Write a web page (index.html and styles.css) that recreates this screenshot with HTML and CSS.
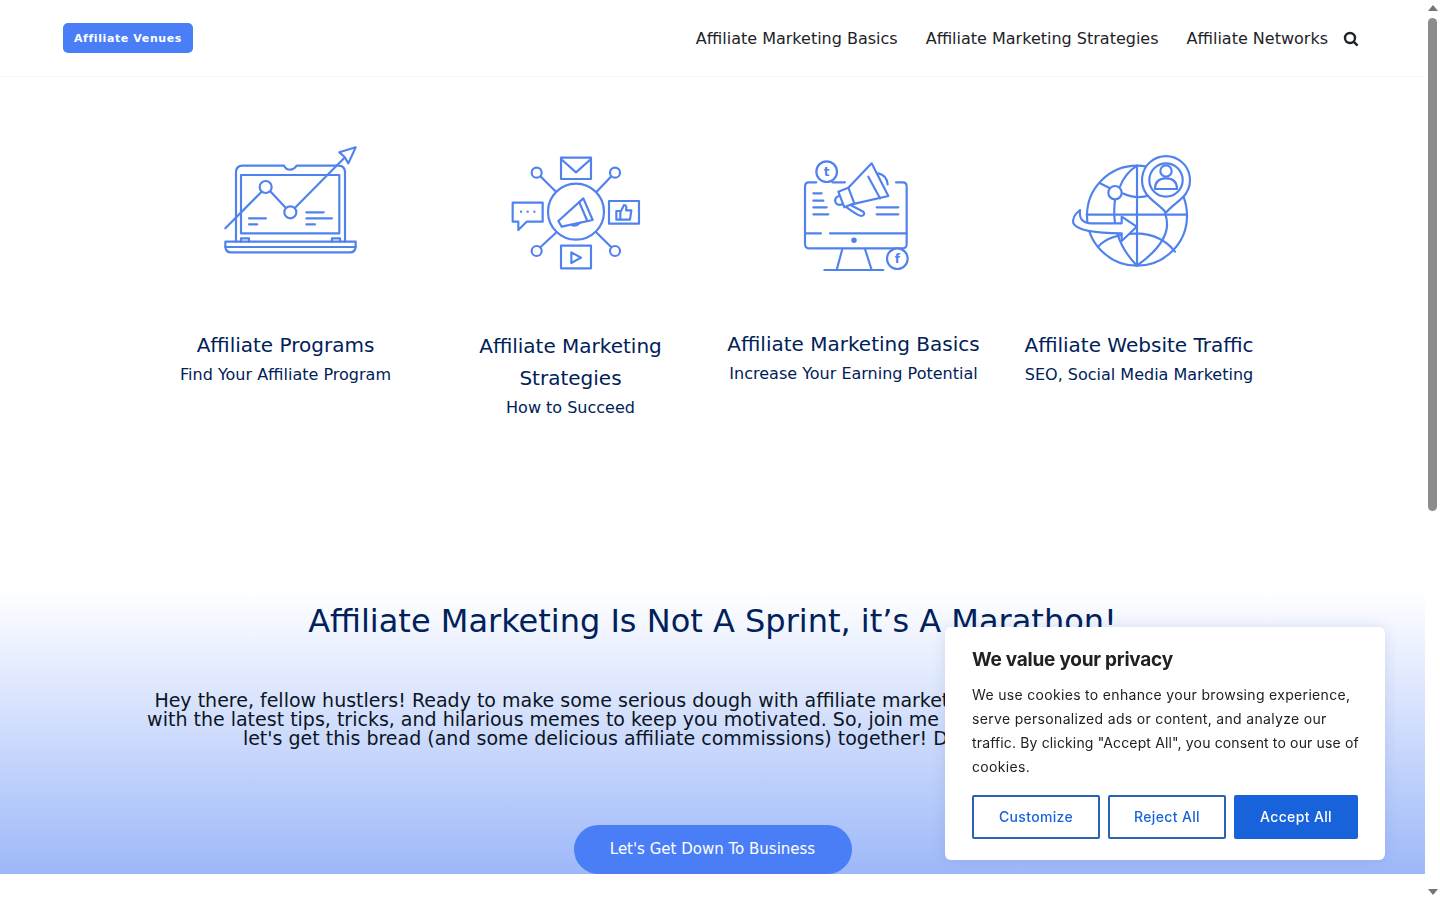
FILE: index.html
```html
<!DOCTYPE html>
<html lang="en">
<head>
<meta charset="utf-8">
<title>Affiliate Venues</title>
<link rel="stylesheet" href="styles.css">
</head>
<body>
<div class="window">
  <div class="page">
    <header class="site-header">
      <a class="logo" href="#">Affiliate Venues</a>
      <nav class="nav">
        <a href="#">Affiliate Marketing Basics</a>
        <a href="#">Affiliate Marketing Strategies</a>
        <a href="#">Affiliate Networks</a>
        <svg class="search" viewBox="0 0 16 16" width="16" height="16"><circle cx="7" cy="7" r="5"/><path d="M10.8 10.8 14.6 14.6"/></svg>
      </nav>
    </header>

    <section class="features">
      <article class="card card-one">
        <svg class="icon icon-one" width="160" height="130" viewBox="0 0 480 390">
          <path d="M78 320V112Q78 92 98 92H222Q228 104 240 104T260 92H385Q405 92 405 112V320"/>
          <rect x="93" y="120" width="295" height="175"/>
          <rect x="46" y="320" width="391" height="16"/>
          <path d="M46 336Q48 352 62 352H421Q435 352 437 336"/>
          <path d="M93 320V310H117V320M366 320V310H390V320"/>
          <path d="M46 280 155 170M182 170 225 216M255 218 402 70"/>
          <circle cx="167" cy="156" r="18"/>
          <circle cx="241" cy="232" r="18"/>
          <path d="M388 52 437 37 415 85 404 66Z"/>
          <path d="M117 250H168M117 268H142M289 232H341M289 250H366M289 268H315"/>
        </svg>
        <h3>Affiliate Programs</h3>
        <p>Find Your Affiliate Program</p>
      </article>
      <article class="card card-two">
        <svg class="icon icon-two" width="150" height="135" viewBox="0 0 450 405">
          <circle cx="228" cy="200" r="84"/>
          <rect x="183" y="38" width="90" height="64"/>
          <path d="M183 42 228 82 273 42"/>
          <path d="M38 173H128V230H80L55 255V230H38Z"/>
          <path class="dots" d="M63 200h.1M83 200h.1M103 200h.1"/>
          <rect x="327" y="168" width="90" height="68"/>
          <path d="M349 198H361V224H349ZM362 200 372 180Q382 180 378 196H394L390 224H362"/>
          <rect x="183" y="302" width="90" height="68"/>
          <path d="M214 322 243 338 214 354Z"/>
          <circle cx="110" cy="83" r="15"/>
          <circle cx="345" cy="83" r="15"/>
          <circle cx="110" cy="318" r="15"/>
          <circle cx="345" cy="318" r="15"/>
          <path d="M121 94 168 140M334 94 290 140M121 307 168 263M334 307 290 263"/>
          <path d="M175 228 250 160 278 225 185 245Z"/>
          <path d="M215 240Q228 246 240 233M238 172 262 228"/>
        </svg>
        <h3>Affiliate Marketing Strategies</h3>
        <p>How to Succeed</p>
      </article>
      <article class="card card-three">
        <svg class="icon icon-three" width="125" height="130" viewBox="0 0 375 390">
          <path d="M64 97H42Q30 97 30 110V282Q30 295 42 295H323Q335 295 335 282V110Q335 97 323 97H303M112 97H150"/>
          <path d="M30 250H78M105 250H335"/>
          <circle class="solid" cx="177" cy="271" r="5"/>
          <path d="M142 297 125 360M210 297 230 360M88 360H265"/>
          <circle cx="95" cy="65" r="31"/>
          <circle class="fill" cx="307" cy="326" r="31"/>
          <text x="95" y="78" class="glyph">t</text>
          <text x="307" y="340" class="glyph">f</text>
          <path d="M250 70Q275 75 278 103"/>
          <path class="fill" d="M130 125 160 113 230 40 280 138 170 163 148 172Z"/>
          <path d="M160 113 178 160M220 80 255 145"/>
          <path d="M133 137Q118 142 121 155T143 163"/>
          <path d="M168 166 205 185Q212 195 200 198 190 198 155 172"/>
          <path d="M55 130H80M55 152H85M55 172H95M55 193H100M245 172H310M245 193H310"/>
        </svg>
        <h3>Affiliate Marketing Basics</h3>
        <p>Increase Your Earning Potential</p>
      </article>
      <article class="card card-four">
        <svg class="icon icon-four" width="135" height="130" viewBox="0 0 405 390">
          <circle cx="216" cy="212" r="150"/>
          <path d="M216 62V362M65 209H365M100 305Q130 268 216 265 290 268 330 320M105 115 135 130M172 145Q216 165 255 150M150 165Q135 280 216 362M300 205Q330 280 216 362M165 125Q180 85 216 62"/>
          <circle class="fill" cx="150" cy="143" r="20"/>
          <path class="fill" d="M303 203C285 180 255 165 243 145A72 72 0 1 1 363 145C351 165 321 180 303 203Z"/>
          <circle cx="303" cy="105" r="50"/>
          <circle cx="303" cy="78" r="17"/>
          <path d="M270 132Q270 100 303 100T336 132Z"/>
          <path class="fill" d="M45 195Q20 215 25 235 40 265 170 265V288L215 245 170 215V235H80Q40 235 45 195Z"/>
        </svg>
        <h3>Affiliate Website Traffic</h3>
        <p>SEO, Social Media Marketing</p>
      </article>
    </section>

    <section class="intro">
      <h2>Affiliate Marketing Is Not A Sprint, it’s A Marathon!</h2>
      <p class="lead">Hey there, fellow hustlers! Ready to make some serious dough with affiliate marketing? Look no further, I've got you,<br>with the latest tips, tricks, and hilarious memes to keep you motivated. So, join me on this wild and crazy journey, and<br>let's get this bread (and some delicious affiliate commissions) together! Don't wait, get going now.</p>
      <a class="cta" href="#">Let's Get Down To Business</a>
    </section>
  </div>

  <aside class="scrollbar">
    <span class="arrow arrow-up"></span>
    <span class="track"><span class="thumb"></span></span>
    <span class="arrow arrow-down"></span>
  </aside>
</div>

<div class="cookie">
  <h4>We value your privacy</h4>
  <p>We use cookies to enhance your browsing experience, serve personalized ads or content, and analyze our <span class="tight">traffic. By clicking "Accept All", you consent to our use of</span> cookies.</p>
  <div class="cookie-actions">
    <button class="btn btn-custom">Customize</button>
    <button class="btn btn-reject">Reject All</button>
    <button class="btn btn-accept">Accept All</button>
  </div>
</div>
</body>
</html>
```
FILE: styles.css
```css
* { box-sizing: border-box; }
html, body { margin: 0; height: 900px; overflow: hidden; background: #fff; }
body { font-family: "DejaVu Sans", sans-serif; color: #002159; }
a { text-decoration: none; color: inherit; }

.window { display: flex; height: 900px; }
.page { flex: 1; min-width: 0; height: 900px; overflow: hidden; }

.site-header {
  height: 77px;
  border-bottom: 1px solid #f6f6f6;
  display: flex;
  align-items: center;
  justify-content: space-between;
  padding: 0 66px 0 63px;
}
.logo {
  width: 130px;
  height: 30px;
  background: #4a7ef7;
  border-radius: 5px;
  color: #fff;
  font: 700 11px/31px "DejaVu Sans", sans-serif;
  letter-spacing: 0.6px;
  text-align: center;
}
.nav { display: flex; align-items: center; gap: 28px; color: #1d2327; font-size: 16px; }
.search { margin-left: -13px; margin-top: 1px; fill: none; stroke: #1d2327; stroke-width: 2.4; }

.features {
  display: grid;
  grid-template-columns: 285px 285px 281px 290px;
  margin-left: 143px;
  height: 513px;
}
.card { text-align: center; display: flex; flex-direction: column; align-items: center; }
.card h3 { margin: 0; font-weight: 400; font-size: 20px; line-height: 32px; color: #002159; }
.card p { margin: 1px 0 0; font-size: 16px; line-height: 26px; color: #002159; }
.card-two h3 { width: 200px; }

.icon { display: block; fill: none; stroke: #5082ee; stroke-width: 6.5; stroke-linejoin: round; stroke-linecap: round; }
.icon .fill { fill: #fff; }
.icon .solid { fill: #5082ee; }
.icon .dots { stroke-width: 7; }
.icon .glyph { fill: #5082ee; stroke: none; font: 700 36px "DejaVu Sans", sans-serif; text-anchor: middle; }
.icon-one { margin: 58px 0 64px 9px; }
.icon-two { margin: 68px 0 50px 9px; }
.icon-three { margin: 73px 0 48px 8px; }
.icon-four { margin: 68px 0 54px -13px; }

.intro {
  height: 284px;
  background: linear-gradient(#fff, #9db8f9);
  text-align: center;
  display: flex;
  flex-direction: column;
  align-items: center;
}
.intro h2 { margin: 10px 0 0; font-weight: 400; font-size: 32px; line-height: 42px; color: #002159; white-space: nowrap; }
.lead { margin: 49px 0 0; font-size: 19px; line-height: 19px; color: #0c1524; white-space: nowrap; }
.cta {
  margin-top: 77px;
  width: 278px;
  height: 49px;
  background: #4a7ef7;
  border-radius: 25px;
  color: #fff;
  font-size: 15px;
  line-height: 48px;
}

.scrollbar { width: 15px; height: 900px; background: #fff; display: flex; flex-direction: column; align-items: center; }
.arrow { flex: none; width: 0; height: 0; border-left: 5px solid transparent; border-right: 5px solid transparent; }
.arrow-up { margin-top: 5px; border-bottom: 6px solid #757575; }
.arrow-down { margin-bottom: 5px; border-top: 6px solid #757575; }
.track { flex: 1; width: 100%; padding: 7px 3px 0; }
.thumb { display: block; height: 493px; background: #8c8c8c; border-radius: 5px; }

.cookie {
  position: fixed;
  left: 945px;
  top: 627px;
  width: 440px;
  height: 233px;
  padding: 21px 27px;
  background: #fff;
  border-radius: 6px;
  box-shadow: 0 0 14px rgba(30, 60, 130, 0.12);
  font-family: "Inter", sans-serif;
  color: #212121;
}
.cookie h4 { margin: 0; font-size: 19px; line-height: 24px; font-weight: 700; letter-spacing: -0.24px; }
.cookie p { margin: 11px -16px 0 0; font-size: 14px; line-height: 24px; letter-spacing: 0.32px; }
.tight { letter-spacing: 0.15px; }
.cookie-actions { display: flex; gap: 8px; margin-top: 16px; }
.btn {
  height: 44px;
  border: 2px solid #1863dc;
  border-radius: 2px;
  background: #fff;
  color: #1863dc;
  font: 500 14px "Inter", sans-serif;
  letter-spacing: 0.35px;
  padding: 0 0 2px;
}
.btn-custom { width: 128px; border-color: #2a62b8; }
.btn-reject { width: 118px; border-color: #2a62b8; }
.btn-accept { width: 124px; background: #1863dc; color: #fff; }
```
